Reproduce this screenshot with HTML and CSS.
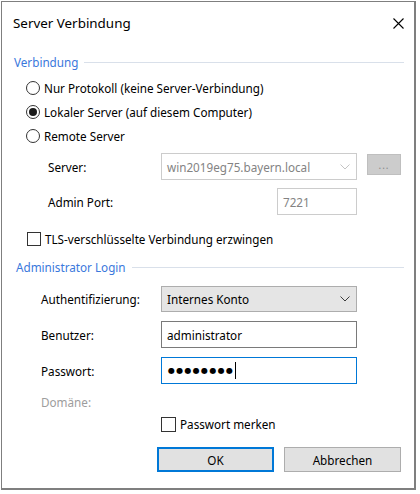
FILE: index.html
```html
<!DOCTYPE html>
<html lang="de">
<head>
<meta charset="utf-8">
<title>Server Verbindung</title>
<link rel="stylesheet" href="styles.css">
</head>
<body>
<div class="window">
  <div class="titlebar">
    <span class="title">Server Verbindung</span>
    <svg class="close" width="11" height="11" viewBox="0 0 11 11"><path d="M0.5 0.5 L10.5 10.5 M10.5 0.5 L0.5 10.5" stroke="#000" stroke-width="1.1" fill="none"/></svg>
  </div>
  <div class="content">
    <div class="group-head"><span class="group-title">Verbindung</span><span class="rule"></span></div>

    <div class="radio-row first"><span class="radio"></span><span>Nur Protokoll (keine Server-Verbindung)</span></div>
    <div class="radio-row"><span class="radio checked"></span><span>Lokaler Server (auf diesem Computer)</span></div>
    <div class="radio-row"><span class="radio"></span><span>Remote Server</span></div>

    <div class="field-row server-row">
      <span class="label label-sub">Server:</span>
      <div class="combo disabled"><span class="combo-text">win2019eg75.bayern.local</span><svg class="chev" width="10" height="6" viewBox="0 0 10 6"><path d="M0.5 0.5 L5 5 L9.5 0.5" stroke="#c4c4c4" stroke-width="1" fill="none"/></svg></div>
      <div class="more-btn">...</div>
    </div>
    <div class="field-row port-row">
      <span class="label label-sub">Admin Port:</span>
      <div class="input port disabled">7221</div>
    </div>

    <div class="check-row tls-row"><span class="check"></span><span>TLS-verschlüsselte Verbindung erzwingen</span></div>

    <div class="group-head login-head"><span class="group-title">Administrator Login</span><span class="rule"></span></div>

    <div class="field-row auth-row">
      <span class="label label-main">Authentifizierung:</span>
      <div class="combo enabled"><span class="combo-text">Internes Konto</span><svg class="chev" width="10" height="6" viewBox="0 0 10 6"><path d="M0.5 0.5 L5 5 L9.5 0.5" stroke="#3c3c3c" stroke-width="1" fill="none"/></svg></div>
    </div>
    <div class="field-row user-row">
      <span class="label label-main">Benutzer:</span>
      <div class="input wide">administrator</div>
    </div>
    <div class="field-row pass-row">
      <span class="label label-main">Passwort:</span>
      <div class="input wide focused"><span class="dots">●●●●●●●●</span><span class="caret"></span></div>
    </div>
    <div class="field-row domain-row">
      <span class="label label-main muted">Domäne:</span>
    </div>

    <div class="check-row remember-row"><span class="check"></span><span>Passwort merken</span></div>

    <div class="buttons">
      <div class="btn default">OK</div>
      <div class="btn">Abbrechen</div>
    </div>
  </div>
</div>
</body>
</html>
```

FILE: styles.css
```css
html, body {
  margin: 0;
  padding: 0;
  background: #ffffff;
}
body {
  font-family: "Noto Sans", "Open Sans", sans-serif;
  font-size: 11.7px;
  color: #000;
}
.window {
  margin: 1px 0 0 1px;
  width: 415px;
  height: 489px;
  box-sizing: border-box;
  border: 1px solid #7f7f7f;
  border-bottom-width: 2px;
  border-right-width: 2px;
  background: #fff;
}
.titlebar {
  height: 42px;
  display: flex;
  align-items: center;
  justify-content: space-between;
  padding: 0 10px 0 11px;
}
.title {
  font-size: 13.4px;
  color: #000;
}
.close {
  display: block;
}
.content {
  padding: 0 10px 0 12px;
}
.group-head {
  display: flex;
  align-items: center;
  height: 18px;
  margin-top: 9px;
}
.group-title {
  color: #3a78dc;
}
.rule {
  flex: 1;
  height: 1px;
  background: #d9e0ea;
  margin-left: 6px;
}
.login-head {
  margin-left: 2px;
}
.radio-row {
  display: flex;
  align-items: center;
  height: 24px;
  padding-left: 12px;
}
.radio-row.first {
  margin-top: 5px;
}
.radio {
  width: 14px;
  height: 14px;
  box-sizing: border-box;
  border: 1px solid #333;
  border-radius: 50%;
  margin-right: 4px;
  display: flex;
  align-items: center;
  justify-content: center;
  background: #fff;
}
.radio.checked::after {
  content: "";
  width: 8px;
  height: 8px;
  border-radius: 50%;
  background: #1a1a1a;
}
.field-row {
  display: flex;
  align-items: center;
}
.label {
  flex: none;
}
.label-sub {
  width: 113px;
  margin-left: 34px;
}
.label-main {
  width: 120px;
  margin-left: 27px;
}
.muted {
  color: #9d9d9d;
}
.server-row {
  margin-top: 5px;
  height: 27px;
}
.combo {
  width: 196px;
  height: 26px;
  box-sizing: border-box;
  display: flex;
  align-items: center;
  justify-content: space-between;
  padding: 0 6px 0 5px;
}
.combo.disabled {
  border: 1px solid #cccccc;
  color: #838383;
  background: #fff;
}
.combo.enabled {
  border: 1px solid #adadad;
  background: #e5e5e5;
}
.server-row .combo {
  height: 27px;
}
.chev {
  display: block;
}
.more-btn {
  width: 34px;
  height: 21px;
  box-sizing: border-box;
  margin-left: 10px;
  margin-top: -4px;
  background: #cccccc;
  border: 1px solid #bfbfbf;
  color: #8a8a8a;
  font-size: 10px;
  display: flex;
  align-items: center;
  justify-content: center;
  letter-spacing: 1px;
}
.port-row {
  margin-top: 8px;
  height: 27px;
}
.input {
  height: 27px;
  box-sizing: border-box;
  border: 1px solid #7a7a7a;
  display: flex;
  align-items: center;
  padding-left: 5px;
  background: #fff;
}
.input.port {
  width: 80px;
  margin-left: 116px;
  border-color: #cccccc;
  color: #838383;
}
.input.wide {
  width: 196px;
}
.input.focused {
  border-color: #0078d7;
  padding-left: 6px;
}
.dots {
  font-family: "DejaVu Sans", sans-serif;
  font-size: 8px;
  letter-spacing: 1.3px;
}
.caret {
  display: inline-block;
  width: 1px;
  height: 17px;
  background: #000;
  margin-left: 1px;
}
.check-row {
  display: flex;
  align-items: center;
  height: 20px;
}
.check {
  width: 14px;
  height: 14px;
  box-sizing: border-box;
  border: 1px solid #333;
  background: #fff;
  margin-right: 4px;
  flex: none;
}
.tls-row {
  margin-top: 14px;
  padding-left: 13px;
}
.auth-row {
  margin-top: 10px;
  height: 26px;
}
.user-row {
  margin-top: 9px;
  height: 27px;
}
.pass-row {
  margin-top: 9px;
  height: 27px;
}
.domain-row {
  margin-top: 9px;
  height: 18px;
}
.remember-row {
  margin-top: 3px;
  padding-left: 147px;
}
.remember-row .check {
  width: 15px;
  height: 15px;
  margin-right: 4px;
}
.buttons {
  display: flex;
  gap: 10px;
  margin-top: 13px;
  padding-left: 143px;
}
.btn {
  width: 117px;
  height: 25px;
  box-sizing: border-box;
  border: 1px solid #adadad;
  background: #e1e1e1;
  display: flex;
  align-items: center;
  justify-content: center;
}
.btn.default {
  border: 2px solid #0078d7;
}
```
